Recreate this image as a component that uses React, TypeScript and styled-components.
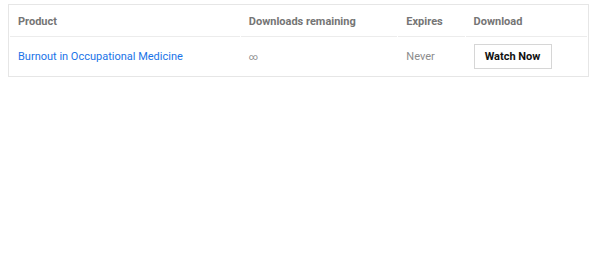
import { createGlobalStyle } from 'styled-components'
import styled from 'styled-components'

const GlobalStyle = createGlobalStyle`
  body {
    margin: 4px 8px;
    background: #fff;
    font-family: Roboto, "Liberation Sans", sans-serif;
  }
`

const downloads = [
  {
    product: 'Burnout in Occupational Medicine',
    remaining: '∞',
    expires: 'Never',
  },
]

export default function App() {
  return <>
    <GlobalStyle />
    <Table>
      <thead>
        <tr>
          <Th width={229}>Product</Th>
          <Th width={156}>Downloads remaining</Th>
          <Th width={66}>Expires</Th>
          <Th width={121}>Download</Th>
        </tr>
      </thead>
      <tbody>
        {downloads.map((d) => (
          <tr key={d.product}>
            <Td><ProductLink href="#">{d.product}</ProductLink></Td>
            <Td muted><Infinity>{d.remaining}</Infinity></Td>
            <Td muted>{d.expires}</Td>
            <Td><WatchButton>Watch Now</WatchButton></Td>
          </tr>
        ))}
      </tbody>
    </Table>
  </>
}

const Table = styled.table`
  width: 581px;
  border: 1px solid #e6e6e6;
  border-collapse: separate;
  border-spacing: 1px;
  font-size: 11px;
`

const Th = styled.th<{ width: number }>`
  width: ${props => props.width - 16}px;
  height: 30px;
  padding: 0 8px;
  box-sizing: content-box;
  text-align: left;
  font-weight: 700;
  color: #757575;
  border-bottom: 1px solid #ececec;
  vertical-align: middle;
`

const Td = styled.td<{ muted?: boolean }>`
  height: 37px;
  padding: 0 8px;
  box-sizing: border-box;
  color: ${props => props.muted ? '#8c8c8c' : '#333'};
  vertical-align: middle;
`

const Infinity = styled.span`
  font-size: 9px;
`

const ProductLink = styled.a`
  color: #1a73e8;
  text-decoration: none;
`

const WatchButton = styled.button`
  width: 78px;
  height: 25px;
  background: #fff;
  border: 1px solid #d6d6d6;
  font-family: inherit;
  font-size: 11px;
  font-weight: 700;
  color: #111;
  padding: 0;
  cursor: pointer;
`
